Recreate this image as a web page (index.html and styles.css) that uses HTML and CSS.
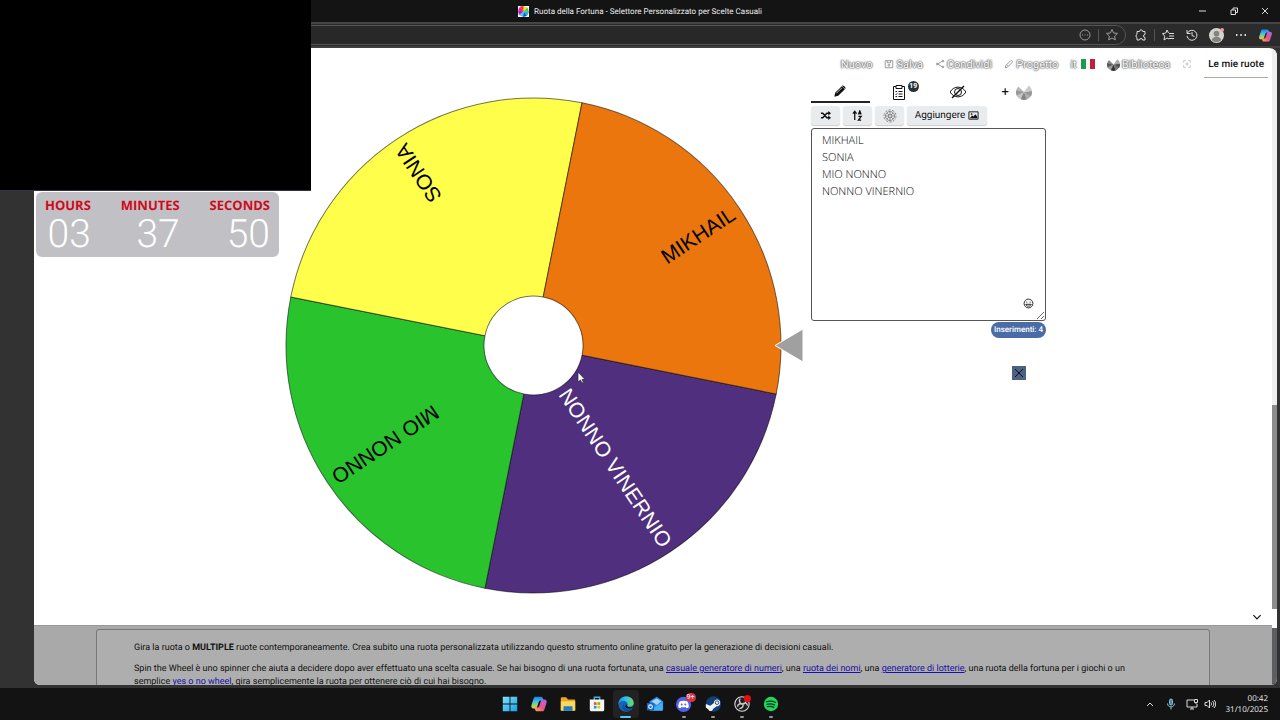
FILE: index.html
```html
<!DOCTYPE html>
<html lang="it">
<head>
  <meta charset="UTF-8">
  <meta name="viewport" content="width=device-width, initial-scale=1.0">
  <title>Ruota della Fortuna - Selettore Personalizzato per Scelte Casuali</title>
  <link rel="stylesheet" href="styles.css">
</head>
<body>
  <svg class="defs" aria-hidden="true">
    <defs>
      <linearGradient id="pilot" x1="0" y1="0" x2="0" y2="1">
        <stop offset="0" stop-color="#1b7ff0"/>
        <stop offset=".45" stop-color="#46c8e0"/>
        <stop offset=".7" stop-color="#8fd46a"/>
        <stop offset="1" stop-color="#f0c84a"/>
      </linearGradient>
      <linearGradient id="pilot2" x1="0" y1="1" x2="1" y2="0">
        <stop offset="0" stop-color="#ffb040"/>
        <stop offset=".45" stop-color="#f0508a"/>
        <stop offset="1" stop-color="#9a6cf5"/>
      </linearGradient>
      <linearGradient id="edge" x1="0" y1="0" x2="1" y2="0">
        <stop offset="0" stop-color="#1c8fe0"/>
        <stop offset=".5" stop-color="#35c1e8"/>
        <stop offset="1" stop-color="#6ee04c"/>
      </linearGradient>
      <linearGradient id="win" x1="0" y1="0" x2="1" y2="1">
        <stop offset="0" stop-color="#7ee2fb"/>
        <stop offset="1" stop-color="#1ba0e8"/>
      </linearGradient>
      <symbol id="copilot" viewBox="0 0 20 20">
        <path d="M6 2h6c1.500 0 2 .8 2.400 2l.6 2h-3c-1.300 0-2 .7-2.400 2l-1.600 5c-.4 1.400-1 2-2.300 2H4c-2 0-3-1.500-2.400-3.500L4 4c.4-1.300 1-2 2-2z" fill="url(#pilot)"/>
        <path d="M14 18H8c-1.500 0-2-.8-2.400-2L5 14h3c1.300 0 2-.7 2.400-2L12 7c.4-1.400 1-2 2.300-2H16c2 0 3 1.500 2.400 3.500L16 16c-.4 1.300-1 2-2 2z" fill="url(#pilot2)"/>
      </symbol>
      <symbol id="mini-wheel" viewBox="0 0 20 20">
        <path d="M10 10 3 3A10 10 0 0 0 0 10z" fill="#888"/>
        <path d="M10 10 0 8a10 10 0 0 0 2 8z" fill="#555"/>
        <path d="M10 10 1 14a10 10 0 0 0 6 5.500z" fill="#999"/>
        <path d="M10 10 6 19a10 10 0 0 0 8 0z" fill="#333"/>
        <path d="M10 10 13 19.500a10 10 0 0 0 6-5.500z" fill="#777"/>
        <path d="M10 10 18.500 15.500A10 10 0 0 0 20 8z" fill="#555"/>
        <path d="M10 10 20 9a10 10 0 0 0-4-7z" fill="#aaa"/>
      </symbol>
    </defs>
  </svg>

  <div class="window">
    <header class="titlebar">
      <div class="title">
        <svg class="favicon" viewBox="0 0 22 22">
          <path d="M0 0h22v22H0z" fill="#fff"/>
          <path d="M11 11 11 0 19 3z" fill="#f6e21c"/>
          <path d="M11 11 19 3l3 9z" fill="#47cf3d"/>
          <path d="M11 11 22 12l-4 8z" fill="#18b8d8"/>
          <path d="M11 11 18 20l-8 2z" fill="#1d4fe0"/>
          <path d="M11 11 10 22l-8-4z" fill="#41d3e8"/>
          <path d="M11 11 2 18l-2-9z" fill="#a020c0"/>
          <path d="M11 11 0 9l4-8z" fill="#ee1c8c"/>
          <path d="M11 11 4 1l7-1z" fill="#f03020"/>
        </svg>
        <span>Ruota della Fortuna - Selettore Personalizzato per Scelte Casuali</span>
      </div>
      <div class="window-buttons">
        <button aria-label="Riduci"><svg viewBox="0 0 10 10"><path d="M1 5h7"/></svg></button>
        <button aria-label="Ripristina"><svg viewBox="0 0 10 10"><path d="M2 4h4.500v4.500H2zM4 4V2h4.500v4.500h-2"/></svg></button>
        <button aria-label="Chiudi"><svg viewBox="0 0 10 10"><path d="M2 2l6 6M8 2 2 8"/></svg></button>
      </div>
    </header>

    <div class="toolbar">
      <div class="address">
        <button aria-label="Altro"><svg viewBox="0 0 14 14"><circle cx="7" cy="7" r="5"/><path d="M4 7h1M6.500 7h1M9 7h1"/></svg></button>
        <span class="divider"></span>
        <button aria-label="Preferito"><svg viewBox="0 0 14 14"><path d="M7 1.500l1.600 3.500 3.900.4-2.900 2.600.8 3.900L7 10l-3.400 1.900.8-3.900L1.500 5.400 5.400 5z"/></svg></button>
      </div>
      <div class="tools">
        <button aria-label="Estensioni"><svg viewBox="0 0 14 14"><path d="M3 3.500h2.500a1.600 1.600 0 0 1 3.200 0H11v3a1.500 1.500 0 0 0 0 3V12H8.500a1.500 1.500 0 0 0-3 0H3V9.500a1.600 1.600 0 0 1 0-3z"/></svg></button>
        <span class="divider"></span>
        <button aria-label="Elenco preferiti"><svg viewBox="0 0 14 14"><path d="M8 11 6 10l-3 2 .7-3.800L1.500 5.600 4.800 5 6 2l1.500 3M8 5.500h5M8 8h5M8 10.500h5"/></svg></button>
        <button aria-label="Cronologia"><svg viewBox="0 0 14 14"><path d="M2.500 5A5 5 0 1 1 2 8M2 2v3.500h3.500M7 4v3.500l2.500 1"/></svg></button>
        <button aria-label="Profilo"><svg class="avatar" viewBox="0 0 16 16"><circle cx="8" cy="8" r="8" fill="#d5d3d0"/><circle cx="8" cy="6" r="3" fill="#858381"/><path d="M3 13c0-5 10-5 10 0-3 2.500-7 2.500-10 0z" fill="#858381"/><circle cx="14" cy="2" r="2" fill="#f4a0a8"/></svg></button>
        <button aria-label="Impostazioni"><svg viewBox="0 0 14 14"><path class="thick" d="M2 7h1.500M6.300 7h1.500M10.500 7H12"/></svg></button>
        <button aria-label="Copilot"><svg class="copilot"><use href="#copilot"/></svg></button>
      </div>
    </div>

    <div class="viewport">
      <div class="page">
        <nav class="menu">
          <a href="#nuovo">Nuovo</a>
          <a href="#salva"><svg viewBox="0 0 12 12"><path d="M1.500 2h9v8.500h-9zM4 2v2.500h4V2"/><circle cx="6" cy="7.500" r="1.200"/></svg>Salva</a>
          <a href="#condividi"><svg viewBox="0 0 12 12"><path d="M9 2.500 3 6l6 3.500"/><circle cx="9.500" cy="2.500" r="1"/><circle cx="2.500" cy="6" r="1"/><circle cx="9.500" cy="9.500" r="1"/></svg>Condividi</a>
          <a href="#progetto"><svg viewBox="0 0 12 12"><path d="M1.500 10.500 2 8l6-6c1-1 3 1 2 2l-6 6zM3 7l2 2"/></svg>Progetto</a>
          <a href="#lingua">it<svg class="flag" viewBox="0 0 14 10"><path d="M0 0h5v10H0z" fill="#169b51"/><path d="M5 0h4v10H5z" fill="#f7f7f7"/><path d="M9 0h5v10H9z" fill="#c3203f"/></svg></a>
          <a href="#biblioteca"><svg class="wheel-icon"><use href="#mini-wheel"/></svg>Biblioteca</a>
          <a href="#schermo" aria-label="Schermo intero"><svg class="expand" viewBox="0 0 12 12"><path d="M2 4.500V2h2.500M7.500 2H10v2.500M10 7.500V10H7.500M4.500 10H2V7.500M4 6h4M6 4v4"/></svg></a>
          <a class="my-wheels" href="#ruote">Le mie ruote</a>
        </nav>

        <main class="stage">
          <svg class="wheel" viewBox="0 0 520 500" role="img" aria-label="Ruota">
            <g transform="translate(248.500 249.500)">
              <g transform="rotate(11.300)" stroke="#000" stroke-opacity=".55">
                <path d="M0 0H247.500A247.500 247.500 0 0 1 0 247.500z" fill="#502f7e"/>
                <path d="M0 0V247.500A247.500 247.500 0 0 1-247.500 0z" fill="#29c42d"/>
                <path d="M0 0H-247.500A247.500 247.500 0 0 1 0-247.500z" fill="#ffff4b"/>
                <path d="M0 0V-247.500A247.500 247.500 0 0 1 247.500 0z" fill="#eb760d"/>
                <circle r="49.500" fill="#fff"/>
              </g>
              <g class="labels">
                <text transform="rotate(-33.700)" x="240" y="7">MIKHAIL</text>
                <text class="light" transform="rotate(56.300)" x="240" y="7">NONNO VINERNIO</text>
                <text transform="rotate(146.300)" x="240" y="7">MIO NONNO</text>
                <text transform="rotate(236.300)" x="240" y="7">SONIA</text>
              </g>
            </g>
            <path d="M490 249.500 518 233v33z" fill="#a0a0a0" stroke="#fff"/>
          </svg>

          <section class="panel">
            <div class="tabs">
              <button class="tab active" aria-label="Modifica"><svg viewBox="0 0 16 16"><path d="M1.500 14.500l1-4.500L10 2.500 13.500 6 6 13.500z" fill="#111"/><path d="M10.800 1.700c.8-.8 4.300 2.500 3.500 3.500l-.5.5-3.500-3.500z" fill="#111"/><path d="M4 10.500 10 4.500" stroke="#fff" stroke-width=".8"/></svg></button>
              <button class="tab" aria-label="Risultati"><svg viewBox="0 0 16 16"><path d="M5 2.500H2.500v13h11v-13H11M5 1.500h6v3H5zM7.500 7.500h4M7.500 10h4M7.500 12.500h4M4.500 7.500l.6.6 1-1.200M4.500 10l.6.6 1-1.200M4.500 12.500l.6.6 1-1.200"/></svg><span class="count">19</span></button>
              <button class="tab" aria-label="Nascondi"><svg viewBox="0 0 16 16"><path d="M0 8c4-6.500 12-6.500 16 0-4 6.500-12 6.500-16 0z"/><circle cx="8" cy="8" r="3.500"/><path d="M14 2 2 14" stroke-width="1.500"/></svg></button>
              <button class="tab" aria-label="Aggiungi ruota"><span class="plus">+</span><svg class="pale"><use href="#mini-wheel"/></svg></button>
            </div>
            <div class="actions">
              <button aria-label="Mescola"><svg viewBox="0 0 12 12"><g stroke-width="1.600"><path d="M1 3.500h2l4.500 5H10M1 8.500h2l4.500-5H10"/></g><path d="M9 1 12 3.500 9 6zM9 6l3 2.500L9 11z" fill="#111" stroke="none"/></svg></button>
              <button aria-label="Ordina"><svg viewBox="0 0 12 12"><g stroke-width="1.400"><path d="M3 11V2M1 4l2-2.500L5 4M7 5l1.500-4L10 5M7.500 4h2M7 7h3l-3 4h3"/></g></svg></button>
              <button aria-label="Opzioni"><svg class="gear" viewBox="0 0 14 14"><circle cx="7" cy="7" r="6" stroke-dasharray="2.500 1.200"/><circle cx="7" cy="7" r="4.500"/><circle cx="7" cy="7" r="1.500"/><path d="M7 2.500v3M7 8.500v3M2.500 7h3M8.500 7h3M4 4l2 2M8 8l2 2M10 4 8 6M6 8l-2 2"/></svg></button>
              <button class="wide">Aggiungere <svg viewBox="0 0 12 12"><path d="M1 2h10v8H1z"/><path d="M2 9l2.500-3 1.500 1 2-2.500L10 7v2z" fill="#111" stroke="none"/><circle cx="4" cy="4.500" r=".6"/></svg></button>
            </div>
            <div class="editor">
              <textarea class="entries" aria-label="Inserimenti" spellcheck="false">MIKHAIL
SONIA
MIO NONNO
NONNO VINERNIO</textarea>
              <button class="emoji" aria-label="Emoji"><svg viewBox="0 0 20 20"><circle cx="10" cy="10" r="8"/><path d="M7 6.500v2M13 6.500v2M5 11.500h10c-1 4.500-9 4.500-10 0z"/></svg></button>
            </div>
            <span class="badge">Inserimenti: 4</span>
            <button class="close" aria-label="Chiudi"><svg viewBox="0 0 14 14"><path d="M3 3l8 8M11 3l-8 8"/></svg></button>
          </section>

          <button class="down" aria-label="Scorri"><svg viewBox="0 0 10 10"><path d="M2 3.500l3 3 3-3"/></svg></button>
        </main>

        <footer class="info">
          <div class="info-box">
            <p>Gira la ruota o <b>MULTIPLE</b> ruote contemporaneamente. Crea subito una ruota personalizzata utilizzando questo strumento online gratuito per la generazione di decisioni casuali.</p>
            <p>Spin the Wheel è uno spinner che aiuta a decidere dopo aver effettuato una scelta casuale. Se hai bisogno di una ruota fortunata, una <a href="#numeri">casuale generatore di numeri</a>, una <a href="#nomi">ruota dei nomi</a>, una <a href="#lotterie">generatore di lotterie</a>, una ruota della fortuna per i giochi o un<br>semplice <a href="#yesno">yes o no wheel</a>, gira semplicemente la ruota per ottenere ciò di cui hai bisogno.</p>
          </div>
        </footer>
      </div>
      <div class="scrollbar"></div>
    </div>

    <div class="taskbar">
      <div class="apps">
        <button aria-label="Start"><svg viewBox="0 0 20 20"><path d="M2 2h7.500v7.500H2zM10.500 2H18v7.500h-7.500zM2 10.500h7.500V18H2zM10.500 10.500H18V18h-7.500z" fill="url(#win)"/></svg></button>
        <button aria-label="Copilot"><svg><use href="#copilot"/></svg></button>
        <button aria-label="Esplora file"><svg viewBox="0 0 20 20"><path d="M2 4c0-1 .5-1.500 1.500-1.500H8L10 5h7c.7 0 1 .4 1 1v11H2z" fill="#e8a820"/><path d="M2 7h16v10.500H2z" fill="#ffd75e"/><path d="M5 12.500h10v5H5z" fill="#1a7fc4"/></svg></button>
        <button aria-label="Store"><svg viewBox="0 0 20 20"><path d="M7 6V2.500h6V6" fill="none" stroke="#41b4ea" stroke-width="1.500"/><path d="M2 5h16v11c0 1.500-.8 2-2 2H4c-1.200 0-2-.5-2-2z" fill="#f5f5f5"/><path d="M6.500 8h3v3h-3z" fill="#f25022"/><path d="M10.500 8h3v3h-3z" fill="#7fba00"/><path d="M6.500 12h3v3h-3z" fill="#00a4ef"/><path d="M10.500 12h3v3h-3z" fill="#ffb900"/></svg></button>
        <button class="current" aria-label="Edge"><svg viewBox="0 0 20 20"><circle cx="10" cy="10" r="8.500" fill="#1267b8"/><path d="M1.500 10C2 -1 18.500-1 18.500 9c0 3-2.500 4-5 4-1.800 0-2.500-.8-2-1.800C13 8 8 5 4.500 7 2.500 8 1.500 10 1.500 10z" fill="url(#edge)"/><path d="M9 9c-3 3 0 7 4 7 2 0 4-1 4-1-1 2-4 3.500-7 3.500-5-1-5-8-1-9.500z" fill="#154f92"/><path d="M11.500 10c-1 2 0 3.500 3 3.500 2 0 3.500-1 3.500-1l-1 2c-3 1-8 1-8-2.500z" fill="#101820"/></svg></button>
        <button aria-label="Outlook"><svg viewBox="0 0 20 20"><path d="M4 7l8-5 7 5v10H4z" fill="#2a8be8"/><path d="M6 7l6-3 5 3-5 4z" fill="#a5d3fb"/><path d="M4 17 18.500 8v9.500H6z" fill="#45aef5"/><path d="M1 9h8v8H1z" fill="#1469c4"/><circle cx="5" cy="13" r="2" fill="none" stroke="#fff" stroke-width="1.200"/></svg></button>
        <button class="open" aria-label="Discord"><svg viewBox="0 0 20 20"><circle cx="9.500" cy="10.500" r="8.500" fill="#5562e8"/><path d="M5.500 7c2-1 6-1 8 0 1.500 2 2 5 1.700 6.500-1 .8-2 1-2.700 1l-.7-1.200c-1 .4-3.600.4-4.600 0l-.7 1.200c-.7 0-1.700-.2-2.700-1C3.500 12 4 9 5.500 7z" fill="#fff"/><circle cx="7.500" cy="10.500" r="1.100" fill="#5562e8"/><circle cx="11.500" cy="10.500" r="1.100" fill="#5562e8"/></svg><span class="alert">9+</span></button>
        <button class="open" aria-label="Steam"><svg viewBox="0 0 20 20"><circle cx="10.500" cy="10" r="8.500" fill="#123f76"/><path d="M2 10l5 2 4-3c-.5-5 7-5.500 7-.5 0 3-2 4-4 4l-4 3c-.5 3-4.500 3-5 .5L2 14z" fill="#f1f5fa"/><circle cx="14.500" cy="8.500" r="2" fill="none" stroke="#123f76"/></svg></button>
        <button class="open" aria-label="OBS"><svg viewBox="0 0 20 20"><circle cx="10" cy="10" r="8" fill="#1d1c1f" stroke="#ddd" stroke-width="1.200"/><path d="M8 4c-2 3 0 6 3 6 2-2 5-1 5 2M11 10c1 3-1 5-4 5M10 10c-3-1-5 1-5 3M11 10c3 0 4-3 3-5" fill="none" stroke="#ccc" stroke-width="1.500"/><circle cx="16" cy="4" r="4" fill="#e80b12"/></svg></button>
        <button class="open" aria-label="Spotify"><svg viewBox="0 0 20 20"><circle cx="10" cy="10" r="8" fill="#1ed760"/><path d="M5 7.500c3.500-1 7-.8 10 .8M5.500 10.300c3-.8 6-.5 8.500.8M6 13c2.500-.6 5-.4 7 .7" fill="none" stroke="#10331d" stroke-width="1.400" stroke-linecap="round"/></svg></button>
      </div>
      <div class="tray">
        <svg viewBox="0 0 12 12"><path d="M3 8l3-3 3 3"/></svg>
        <svg class="mic" viewBox="0 0 12 12"><rect x="4.500" y="1" width="3" height="6" rx="1.500" fill="#3f8ba8"/><path d="M2.500 5.500c0 4.500 7 4.500 7 0M6 9v2.500"/></svg>
        <svg viewBox="0 0 12 12"><path d="M8 2H1v7h10V6M4 11h4M6 9v2M8.500 1.500h3v3h-3zM10 4.500V6"/></svg>
        <svg viewBox="0 0 12 12"><path d="M1 4.500h2l2.500-2.500v8L3 7.500H1zM7 4.500c.8 1 .8 2 0 3M8.500 3c1.700 2 1.700 4 0 6M10 2c2.200 2.500 2.200 5.500 0 8"/></svg>
        <div class="clock"><time>00:42</time><time>31/10/2025</time></div>
      </div>
    </div>
  </div>

  <div class="camera"></div>
  <div class="timer">
    <div><span>HOURS</span><strong>03</strong></div>
    <div><span>MINUTES</span><strong>37</strong></div>
    <div><span>SECONDS</span><strong>50</strong></div>
  </div>
  <svg class="cursor" viewBox="0 0 9 13"><path d="M1 1v10l2.500-2 1.500 3 1.500-.8L5 8.500h3z" fill="#fff" stroke="#222" stroke-width=".7"/></svg>
</body>
</html>
```
FILE: styles.css
```css
* {
  box-sizing: border-box;
}
body {
  margin: 0;
  font-family: Roboto, "Liberation Sans", sans-serif;
  font-size: 11px;
  color: #111;
  background-color: #323232;
  text-rendering: geometricPrecision;
}
button {
  display: flex;
  align-items: center;
  justify-content: center;
  padding: 0;
  border: none;
  background: none;
  color: inherit;
  font: inherit;
  text-rendering: inherit;
}
svg {
  display: block;
  flex: none;
}
.defs {
  position: absolute;
  width: 0;
  height: 0;
}
.window {
  display: flex;
  flex-direction: column;
  height: 100vh;
}

/* browser */
.titlebar {
  display: flex;
  align-items: center;
  height: 22px;
  background-color: #141414;
  color: #eee;
  font-size: 8px;
}
.titlebar::before {
  content: "";
  flex: 1;
}
.title {
  display: flex;
  align-items: center;
  gap: 5px;
}
.favicon {
  width: 11px;
  height: 11px;
}
.window-buttons {
  flex: 1;
  display: flex;
  justify-content: flex-end;
}
.window-buttons button {
  width: 31px;
}
.window-buttons svg {
  width: 10px;
  height: 10px;
}
.window-buttons svg,
.toolbar svg,
.tray svg {
  fill: none;
  stroke: #ddd;
}
.toolbar {
  display: flex;
  align-items: center;
  height: 26px;
  border-top: 2px solid #454545;
  border-bottom: 2px solid #404040;
  background-color: #2b2b2b;
}
.address {
  flex: 1;
  display: flex;
  align-items: center;
  justify-content: flex-end;
  gap: 6px;
  height: 20px;
  margin-left: 60px;
  padding-right: 6px;
  border: 1px solid #555;
  border-radius: 10px;
  background-color: #282828;
}
.toolbar .address svg {
  stroke: #999;
}
.divider {
  width: 1px;
  height: 12px;
  background-color: #555;
}
.tools {
  display: flex;
  align-items: center;
  gap: 10px;
  padding: 0 7px 0 8px;
}
.tools .divider {
  margin: 0 -4px;
}
.toolbar svg {
  width: 14px;
  height: 14px;
}
.toolbar .avatar {
  width: 15px;
  height: 15px;
  stroke: none;
}
.toolbar .copilot {
  width: 15px;
  height: 15px;
  stroke: none;
}
.thick {
  stroke-width: 2;
}
.viewport {
  flex: 1;
  display: flex;
  min-height: 0;
  margin: 0 3px 3px 34px;
  border-radius: 0 8px 6px 6px;
  background-color: #fff;
  overflow: hidden;
}
.page {
  flex: 1;
  display: flex;
  flex-direction: column;
  min-width: 0;
}
.scrollbar {
  width: 5px;
  background: linear-gradient(#efefef 56%, #8c8c8c 56%, #8c8c8c 88%, #fff 88%, #fff 91%, #5d5e62 91%);
}

/* menu */
.menu {
  display: flex;
  align-items: center;
  justify-content: flex-end;
  gap: 12px;
  height: 32px;
  padding-right: 4px;
}
.menu a {
  display: flex;
  align-items: center;
  gap: 2px;
  color: #fff;
  text-decoration: none;
  text-shadow: 0 0 1px #555, 0 0 2px #555, 0 0 2px #888;
}
.menu svg {
  width: 10px;
  height: 10px;
  fill: none;
  stroke: #888;
}
.menu .flag {
  width: 14px;
  margin-left: 2px;
  stroke: none;
}
.menu .wheel-icon {
  width: 13px;
  height: 13px;
  stroke: none;
}
.menu .expand {
  stroke: #bbb;
}
.menu .my-wheels {
  height: 28px;
  padding: 2px 4px 0;
  border-bottom: 1px solid #aaa;
  color: #111;
  font-size: 10px;
  font-weight: 500;
  text-shadow: none;
}

/* wheel and entries */
.stage {
  flex: 1;
  display: grid;
  grid-template-columns: 251fr 520fr 241fr 226fr;
  min-height: 0;
}
.wheel {
  grid-column: 2;
  width: 100%;
  margin-top: 16px;
}
.labels {
  font-family: "Liberation Sans", Arial, sans-serif;
  font-size: 21px;
  text-anchor: end;
}
.light {
  fill: #fff;
}
.panel {
  display: flex;
  flex-direction: column;
  padding: 1px 0 0 6px;
}
.tabs {
  display: grid;
  grid-template-columns: repeat(4, 1fr);
  height: 22px;
}
.tab {
  position: relative;
}
.tab.active {
  border-bottom: 2px solid #222;
}
.tab svg {
  width: 16px;
  height: 16px;
  fill: none;
  stroke: #111;
}
.tab.active svg {
  width: 14px;
  height: 14px;
  stroke: none;
}
.tab .pale {
  stroke: none;
  opacity: .6;
}
.plus {
  margin-right: 7px;
  font-size: 13px;
}
.count {
  position: absolute;
  top: 0;
  left: 38px;
  width: 11px;
  border-radius: 6px;
  background-color: #263238;
  color: #fff;
  font-size: 7px;
  font-weight: bold;
  line-height: 11px;
}
.actions {
  display: flex;
  gap: 3px;
  margin: 3px 0;
}
.actions button {
  width: 29px;
  height: 19px;
  border-radius: 3px;
  background-color: #e9ecef;
  box-shadow: 0 1px 1px #ccc;
}
.actions .wide {
  width: 80px;
  gap: 3px;
  font-size: 10px;
}
.actions svg {
  width: 11px;
  height: 11px;
  fill: none;
  stroke: #111;
}
.actions .gear {
  width: 14px;
  height: 14px;
  stroke: #666;
  stroke-width: .7;
}
.editor {
  position: relative;
  height: 193px;
}
.entries {
  display: block;
  width: 100%;
  height: 100%;
  padding: 3px 10px;
  border: 1px solid #555;
  border-radius: 3px;
  background-color: #fff;
  color: #000;
  font-family: "Open Sans", "Noto Sans", sans-serif;
  font-size: 11px;
  font-weight: 300;
  line-height: 17px;
  text-rendering: inherit;
}
.emoji {
  position: absolute;
  right: 12px;
  bottom: 12px;
}
.emoji svg {
  width: 11px;
  height: 11px;
  fill: none;
  stroke: #111;
  stroke-width: 1.6;
}
.badge {
  align-self: flex-end;
  margin-top: 1px;
  padding: 0 3px;
  border-radius: 8px;
  background-color: #496ba6;
  color: #fff;
  font-size: 8px;
  font-weight: 500;
  line-height: 16px;
}
.close {
  align-self: flex-end;
  width: 14px;
  height: 14px;
  margin: 28px 20px 0 0;
  background-color: #4d6184;
}
.close svg {
  width: 14px;
  height: 14px;
  stroke: #111;
}
.down {
  align-self: end;
  justify-self: end;
  margin: 0 9px 2px 0;
}
.down svg {
  width: 12px;
  height: 12px;
  fill: none;
  stroke: #111;
}

/* description */
.info {
  flex: none;
  height: 60px;
  padding: 3px 62px 0;
  border-top: 1px solid #999;
  background-color: #a9a9aa;
  overflow: hidden;
}
.info-box {
  padding: 12px 37px;
  border: 1px solid #777;
  border-radius: 3px 3px 0 0;
  background-color: #aeaeae;
  font-size: 9px;
  line-height: 13px;
}
.info-box p {
  margin: 0 0 8px;
}
.info-box a {
  color: #1a0dab;
}

/* taskbar */
.taskbar {
  display: flex;
  align-items: center;
  height: 32px;
  background-color: #131313;
}
.taskbar::before {
  content: "";
  flex: 1;
  padding-right: 12px;
}
.apps {
  display: flex;
  gap: 3px;
}
.apps button {
  position: relative;
  width: 26px;
  height: 28px;
  border-radius: 3px;
}
.apps svg {
  width: 18px;
  height: 18px;
}
.apps .current {
  background-color: #222;
}
.apps .current::after,
.apps .open::after {
  content: "";
  position: absolute;
  bottom: 0;
  width: 4px;
  height: 2px;
  border-radius: 1px;
  background-color: #999;
}
.apps .current::after {
  width: 11px;
  background-color: #5cc4f0;
}
.alert {
  position: absolute;
  top: 3px;
  right: 1px;
  width: 10px;
  border-radius: 5px;
  background-color: #d83444;
  color: #fff;
  font-size: 7px;
  line-height: 9px;
}
.tray {
  flex: 1;
  display: flex;
  align-items: center;
  justify-content: flex-end;
  gap: 6px;
  padding-right: 12px;
}
.tray svg {
  width: 12px;
  height: 12px;
}
.tray .mic {
  margin: 0 3px;
  stroke: #8bc5da;
}
.clock {
  display: flex;
  flex-direction: column;
  margin-left: 4px;
  color: #eee;
  font-family: "Open Sans", "Noto Sans", sans-serif;
  font-size: 8px;
  line-height: 11px;
  text-align: right;
}

/* stream overlays */
.camera {
  position: absolute;
  top: 0;
  left: 0;
  width: 311px;
  height: 191px;
  border-bottom: 1px solid #334;
  background-color: #000;
}
.timer {
  position: absolute;
  top: 192px;
  left: 36px;
  display: flex;
  justify-content: space-between;
  width: 243px;
  height: 65px;
  padding: 5px 9px;
  border-radius: 6px;
  background-color: #c1c0c4;
}
.timer div {
  display: flex;
  flex-direction: column;
  align-items: flex-end;
}
.timer span {
  color: #d00a1c;
  font-family: "Open Sans", "Noto Sans", sans-serif;
  font-size: 13px;
  font-weight: bold;
  line-height: 16px;
}
.timer strong {
  color: #fff;
  font-size: 39px;
  font-weight: 300;
  line-height: 43px;
}
.cursor {
  position: absolute;
  top: 371px;
  left: 577px;
  width: 9px;
  height: 13px;
}
```
